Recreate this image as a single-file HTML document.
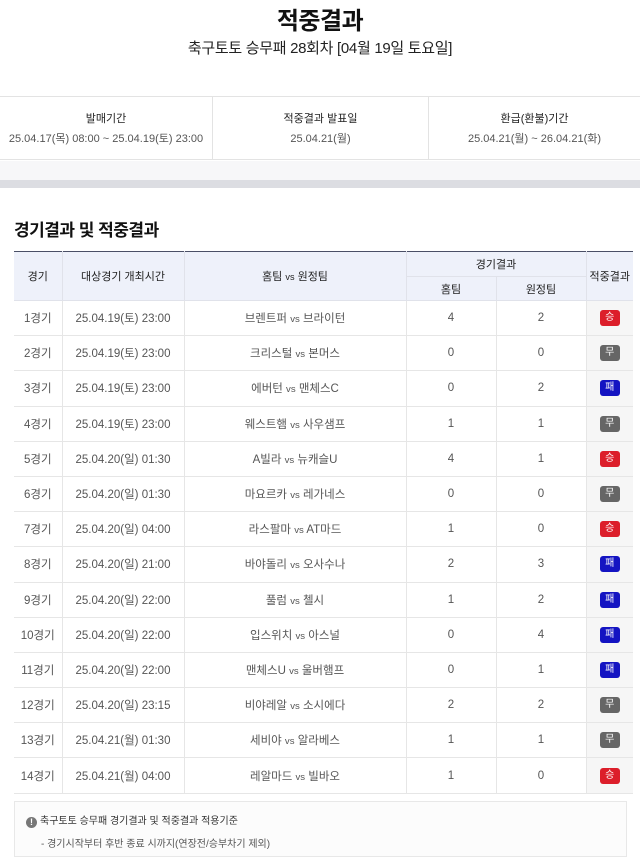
<!DOCTYPE html>
<html><head><meta charset="utf-8"><style>
*{margin:0;padding:0;box-sizing:border-box}
body{width:640px;height:863px;background:#fff;font-family:"Liberation Sans","Noto Sans CJK KR",sans-serif;color:#333;position:relative;overflow:hidden}
.t1{position:absolute;top:1px;left:0;width:640px;text-align:center;font-size:24px;font-weight:bold;color:#111;letter-spacing:-0.5px}
.t2{position:absolute;top:37px;left:0;width:640px;text-align:center;font-size:15px;color:#222;letter-spacing:-0.3px}
.info{position:absolute;top:96px;left:0;width:640px;height:64px;border-top:1px solid #e3e3e3;border-bottom:1px solid #e3e3e3;display:flex}
.info div{text-align:center;font-size:11px;color:#555;padding-top:12px;line-height:20px;white-space:nowrap}
.info b{display:block;font-weight:normal;color:#222;font-size:11px}
.g1{position:absolute;top:161px;left:0;width:640px;height:19px;background:#f7f7f9}
.g2{position:absolute;top:180px;left:0;width:640px;height:8px;background:#dcdde2}
h2{position:absolute;top:216px;left:14px;font-size:17px;font-weight:bold;color:#111;letter-spacing:-0.5px}
table{position:absolute;top:251px;left:14px;width:619px;border-collapse:collapse;table-layout:fixed;border-top:1px solid #4a4f66}
th{background:#eef1fa;font-weight:normal;font-size:11px;color:#222;border:1px solid #e0e2ea;border-top:none}
td{height:35.2px;text-align:center;font-size:11.5px;color:#555;border:1px solid #e6e6e6}
tr td:first-child,tr th:first-child{border-left:none}
tr td:last-child,tr th:last-child{border-right:none}
td:last-child{background:#f6f6f6}
.b{display:inline-block;width:20px;height:16px;border-radius:3px;color:#fff;font-size:10px;line-height:16px;vertical-align:middle}
.w{background:#dc1e2a}.d{background:#666}.l{background:#1414c2}
.note{position:absolute;top:801px;left:14px;width:613px;height:56px;border:1px solid #e8e8e8;background:#fcfcfc;font-size:10px;color:#333}
.note p{position:absolute;left:11px;top:10px}
.note span.i{display:inline-block;width:11px;height:11px;border-radius:50%;background:#777;color:#fff;font-size:9px;line-height:11px;text-align:center;font-weight:bold;margin-right:3px;vertical-align:-1px}
.note p.s{top:33px;left:26px;color:#555}
</style></head><body>
<div class="t1">적중결과</div>
<div class="t2">축구토토 승무패 28회차 [04월 19일 토요일]</div>
<div class="info">
<div style="width:213px;border-right:1px solid #e3e3e3"><b>발매기간</b>25.04.17(목) 08:00 ~ 25.04.19(토) 23:00</div>
<div style="width:216px;border-right:1px solid #e3e3e3"><b>적중결과 발표일</b>25.04.21(월)</div>
<div style="width:211px"><b>환급(환불)기간</b>25.04.21(월) ~ 26.04.21(화)</div>
</div>
<div class="g1"></div><div class="g2"></div>
<h2>경기결과 및 적중결과</h2>
<table>
<colgroup><col style="width:48px"><col style="width:122px"><col style="width:222px"><col style="width:90px"><col style="width:90px"><col style="width:47px"></colgroup>
<tr style="height:25px"><th rowspan="2">경기</th><th rowspan="2">대상경기 개최시간</th><th rowspan="2">홈팀 <small>vs</small> 원정팀</th><th colspan="2">경기결과</th><th rowspan="2">적중결과</th></tr>
<tr style="height:24px"><th>홈팀</th><th>원정팀</th></tr>
<tr><td>1경기</td><td>25.04.19(토) 23:00</td><td>브렌트퍼 <small>vs</small> 브라이턴</td><td>4</td><td>2</td><td><span class="b w">승</span></td></tr>
<tr><td>2경기</td><td>25.04.19(토) 23:00</td><td>크리스털 <small>vs</small> 본머스</td><td>0</td><td>0</td><td><span class="b d">무</span></td></tr>
<tr><td>3경기</td><td>25.04.19(토) 23:00</td><td>에버턴 <small>vs</small> 맨체스C</td><td>0</td><td>2</td><td><span class="b l">패</span></td></tr>
<tr><td>4경기</td><td>25.04.19(토) 23:00</td><td>웨스트햄 <small>vs</small> 사우샘프</td><td>1</td><td>1</td><td><span class="b d">무</span></td></tr>
<tr><td>5경기</td><td>25.04.20(일) 01:30</td><td>A빌라 <small>vs</small> 뉴캐슬U</td><td>4</td><td>1</td><td><span class="b w">승</span></td></tr>
<tr><td>6경기</td><td>25.04.20(일) 01:30</td><td>마요르카 <small>vs</small> 레가네스</td><td>0</td><td>0</td><td><span class="b d">무</span></td></tr>
<tr><td>7경기</td><td>25.04.20(일) 04:00</td><td>라스팔마 <small>vs</small> AT마드</td><td>1</td><td>0</td><td><span class="b w">승</span></td></tr>
<tr><td>8경기</td><td>25.04.20(일) 21:00</td><td>바야돌리 <small>vs</small> 오사수나</td><td>2</td><td>3</td><td><span class="b l">패</span></td></tr>
<tr><td>9경기</td><td>25.04.20(일) 22:00</td><td>풀럼 <small>vs</small> 첼시</td><td>1</td><td>2</td><td><span class="b l">패</span></td></tr>
<tr><td>10경기</td><td>25.04.20(일) 22:00</td><td>입스위치 <small>vs</small> 아스널</td><td>0</td><td>4</td><td><span class="b l">패</span></td></tr>
<tr><td>11경기</td><td>25.04.20(일) 22:00</td><td>맨체스U <small>vs</small> 울버햄프</td><td>0</td><td>1</td><td><span class="b l">패</span></td></tr>
<tr><td>12경기</td><td>25.04.20(일) 23:15</td><td>비야레알 <small>vs</small> 소시에다</td><td>2</td><td>2</td><td><span class="b d">무</span></td></tr>
<tr><td>13경기</td><td>25.04.21(월) 01:30</td><td>세비야 <small>vs</small> 알라베스</td><td>1</td><td>1</td><td><span class="b d">무</span></td></tr>
<tr><td>14경기</td><td>25.04.21(월) 04:00</td><td>레알마드 <small>vs</small> 빌바오</td><td>1</td><td>0</td><td><span class="b w">승</span></td></tr>
</table>
<div class="note">
<p><span class="i">!</span>축구토토 승무패 경기결과 및 적중결과 적용기준</p>
<p class="s">- 경기시작부터 후반 종료 시까지(연장전/승부차기 제외)</p>
</div>
</body></html>
